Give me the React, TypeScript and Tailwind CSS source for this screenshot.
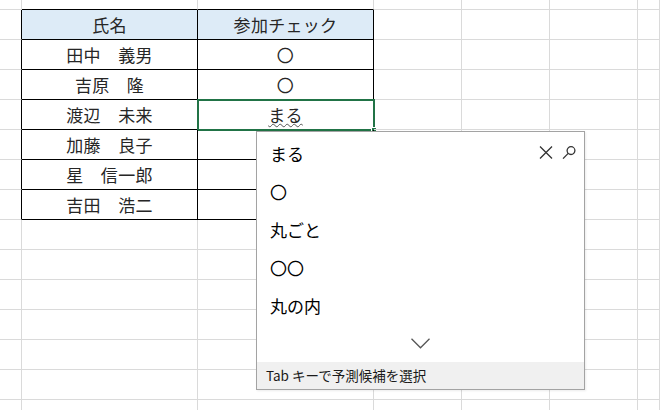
import React from 'react';

const COL_CLASSES = [
  'w-[22px]',
  'w-[176px]',
  'w-[176px]',
  'w-[88px]',
  'w-[88px]',
  'w-[88px]',
  'flex-1',
];

const HEADER = ['氏名', '参加チェック'];
const MEMBERS: [string, string][] = [
  ['田中　義男', '〇'],
  ['吉原　隆', '〇'],
  ['渡辺　未来', 'まる'],
  ['加藤　良子', ''],
  ['星　信一郎', ''],
  ['吉田　浩二', ''],
];

const SUGGESTIONS = ['まる', '〇', '丸ごと', '〇〇', '丸の内'];

const ROW_COUNT = 15;

function cellText(r: number, c: number): string {
  if (c < 1 || c > 2) return '';
  if (r === 1) return HEADER[c - 1];
  if (r >= 2 && r <= 7) return MEMBERS[r - 2][c - 1];
  return '';
}

function Cell({ r, c }: { r: number; c: number }) {
  const inTable = r >= 1 && r <= 7 && c >= 1 && c <= 2;
  const leftOfTable = c === 0 && r >= 1 && r <= 7;
  const aboveTable = r === 0 && (c === 1 || c === 2);
  const selected = r === 4 && c === 2;

  let border = 'border-r border-b border-[#dadada]';
  if (inTable) border = 'border-r border-b border-black';
  else if (leftOfTable) border = 'border-r border-b border-r-black border-b-[#dadada]';
  else if (aboveTable) border = 'border-r border-b border-r-[#dadada] border-b-black';

  const text = cellText(r, c);

  return (
    <div
      className={`relative flex items-center justify-center shrink-0 ${COL_CLASSES[c]} ${border} ${
        r === 1 && inTable ? 'bg-[#ddebf7]' : ''
      }`}
    >
      {text && (
        <span
          className={`text-[17px] leading-none text-[#262626] whitespace-pre tracking-[0.3px] ${
            selected ? 'underline decoration-wavy decoration-[#555] decoration-1 underline-offset-[1px]' : ''
          }`}
        >
          {text}
        </span>
      )}
      {selected && (
        <div className="absolute -left-px -top-px -right-[2px] -bottom-[2px] border-2 border-[#217346] pointer-events-none">
          <div className="absolute -right-[4px] -bottom-[4px] w-[6px] h-[6px] bg-[#217346] border border-white" />
        </div>
      )}
    </div>
  );
}

function Popup() {
  return (
    <div className="absolute left-[256px] top-[131px] w-[329px] h-[259px] bg-white border border-[#a3a3a3] flex flex-col shadow-[1px_1px_2px_rgba(0,0,0,0.08)]">
      <div className="flex flex-col pt-[2px]">
        {SUGGESTIONS.map((s, i) => (
          <div key={s} className="h-[38px] flex items-center pl-[13px] pr-[8px]">
            <span className="text-[17px] leading-none text-black">{s}</span>
            {i === 0 && (
              <div className="ml-auto flex items-center gap-[9px] -mt-[1px]">
                <svg width="14" height="13" viewBox="0 0 14 13" fill="none" stroke="#333" strokeWidth="1.3">
                  <path d="M1 0.5 L13 12.5 M13 0.5 L1 12.5" />
                </svg>
                <svg width="14" height="13" viewBox="0 0 14 13" fill="none" stroke="#333" strokeWidth="1.3">
                  <circle cx="9" cy="4.6" r="3.9" />
                  <path d="M6.2 7.4 L1 12.6" />
                </svg>
              </div>
            )}
          </div>
        ))}
      </div>
      <div className="flex-1 flex items-center justify-center">
        <svg width="19" height="11" viewBox="0 0 19 11" fill="none" stroke="#555" strokeWidth="1.3">
          <path d="M0.5 0.8 L9.5 9.8 L18.5 0.8" />
        </svg>
      </div>
      <div className="h-[27px] bg-[#f0f0f0] flex items-center pl-[9px]">
        <span className="text-[13.5px] leading-none text-[#1a1a1a]">Tab キーで予測候補を選択</span>
      </div>
    </div>
  );
}

export default function App() {
  return (
    <div
      className="relative w-[660px] h-[410px] overflow-hidden bg-white"
      style={{ fontFamily: '"Noto Sans CJK JP", "Noto Sans", sans-serif' }}
    >
      <div className="flex flex-col">
        {Array.from({ length: ROW_COUNT }).map((_, r) => (
          <div key={r} className={`flex ${r === 0 ? 'h-[10px]' : 'h-[30px]'}`}>
            {COL_CLASSES.map((_, c) => (
              <Cell key={c} r={r} c={c} />
            ))}
          </div>
        ))}
      </div>
      <Popup />
    </div>
  );
}
